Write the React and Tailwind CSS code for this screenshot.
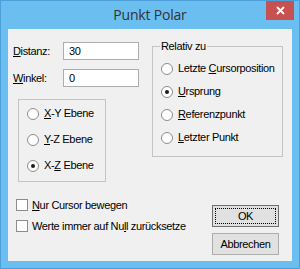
import { useState } from 'react';

const font = { fontFamily: '"Liberation Sans", Arial, sans-serif' };

function Radio({ checked, children, onClick }) {
  return (
    <div className="flex h-[13px] cursor-default items-center gap-[5px]" onClick={onClick}>
      <span className="flex h-[12px] w-[12px] shrink-0 items-center justify-center rounded-full border border-[#8c8c8c] bg-white">
        {checked ? <span className="h-[4px] w-[4px] rounded-full bg-[#1a1a1a]" /> : null}
      </span>
      <span className="leading-[13px]">{children}</span>
    </div>
  );
}

function Check({ checked, children, onClick }) {
  return (
    <div className="flex h-[12px] cursor-default items-center gap-[4px]" onClick={onClick}>
      <span className="flex h-[12px] w-[12px] shrink-0 items-center justify-center border border-[#8c8c8c] bg-white text-[9px]">
        {checked ? '✓' : null}
      </span>
      <span className="whitespace-nowrap leading-[13px]">{children}</span>
    </div>
  );
}

const U = ({ children }) => <span className="underline underline-offset-[1px]">{children}</span>;

export default function App() {
  const [plane, setPlane] = useState('xz');
  const [relative, setRelative] = useState('origin');
  const [cursorOnly, setCursorOnly] = useState(false);
  const [resetZero, setResetZero] = useState(false);

  return (
    <div className="flex h-[269px] w-[300px] flex-col border border-[#4c9fd8] bg-[#6bbff0]">
      <div className="grid h-[28px] grid-cols-[1fr_auto_1fr]">
        <div />
        <div
          className="pt-[4px] text-[14px] leading-[19px] tracking-[-0.2px] text-[#333333]"
          style={{ fontFamily: '"Open Sans", "Noto Sans", sans-serif' }}
        >
          Punkt Polar
        </div>
        <div className="flex justify-end pr-[5px]">
          <button className="flex h-[19px] w-[28px] items-center justify-center bg-[#c75050]">
            <svg width="9" height="9" viewBox="0 0 9 9">
              <path d="M1 1L8 8M8 1L1 8" stroke="white" strokeWidth="1.8" />
            </svg>
          </button>
        </div>
      </div>

      <div className="mx-[7px] mb-[7px] flex flex-1 flex-col bg-[#f0f0f0] pl-[5px] pr-[9px] text-[11px] text-black tracking-[-0.35px]" style={font}>
        <div className="flex items-start pt-[11px]">
          <div className="mt-[2px] w-[126px]">
            <div className="flex items-center">
              <span className="w-[50px]">
                <U>D</U>istanz:
              </span>
              <input
                className="h-[18px] w-[76px] border border-[#abadb3] bg-white px-[5px] outline-none"
                defaultValue="30"
              />
            </div>
            <div className="mt-[9px] flex items-center">
              <span className="w-[50px]">
                <U>W</U>inkel:
              </span>
              <input
                className="h-[18px] w-[76px] border border-[#abadb3] bg-white px-[5px] outline-none"
                defaultValue="0"
              />
            </div>
            <div className="ml-[5px] mt-[12px] flex h-[83px] w-[88px] flex-col gap-[13px] border border-[#c4c4c4] pl-[8px] pt-[7px]">
              <Radio checked={plane === 'xy'} onClick={() => setPlane('xy')}>
                <U>X</U>-Y Ebene
              </Radio>
              <Radio checked={plane === 'yz'} onClick={() => setPlane('yz')}>
                <U>Y</U>-Z Ebene
              </Radio>
              <Radio checked={plane === 'xz'} onClick={() => setPlane('xz')}>
                X-<U>Z</U> Ebene
              </Radio>
            </div>
          </div>

          <fieldset className="ml-[13px] flex h-[117px] w-[131px] flex-col border border-[#c4c4c4] pl-[8px]">
            <legend className="-ml-[1px] px-[1px] leading-[13px]">Relativ zu</legend>
            <div className="flex flex-col gap-[10px] pt-[9px]">
              <Radio checked={relative === 'last'} onClick={() => setRelative('last')}>
                Letzte <U>C</U>ursorposition
              </Radio>
              <Radio checked={relative === 'origin'} onClick={() => setRelative('origin')}>
                <U>U</U>rsprung
              </Radio>
              <Radio checked={relative === 'ref'} onClick={() => setRelative('ref')}>
                <U>R</U>eferenzpunkt
              </Radio>
              <Radio checked={relative === 'point'} onClick={() => setRelative('point')}>
                <U>L</U>etzter Punkt
              </Radio>
            </div>
          </fieldset>
        </div>

        <div className="flex items-start">
          <div className="ml-[3px] mt-[17px] flex flex-col gap-[9px]">
            <Check checked={cursorOnly} onClick={() => setCursorOnly(!cursorOnly)}>
              <U>N</U>ur Cursor bewegen
            </Check>
            <Check checked={resetZero} onClick={() => setResetZero(!resetZero)}>
              Werte immer auf Nu<U>l</U>l zurücksetze
            </Check>
          </div>
          <div className="ml-auto mr-[4px] mt-[23px] flex flex-col gap-[6px]">
            <button className="flex h-[22px] w-[67px] items-center justify-center border border-[#6e6e6e] bg-[#e1e1e1] p-[2px]">
              <span className="flex h-full w-full items-center justify-center border border-dotted border-black">
                OK
              </span>
            </button>
            <button className="flex h-[22px] w-[67px] items-center justify-center border border-[#adadad] bg-[#e1e1e1]">
              Abbrechen
            </button>
          </div>
        </div>
      </div>
    </div>
  );
}
